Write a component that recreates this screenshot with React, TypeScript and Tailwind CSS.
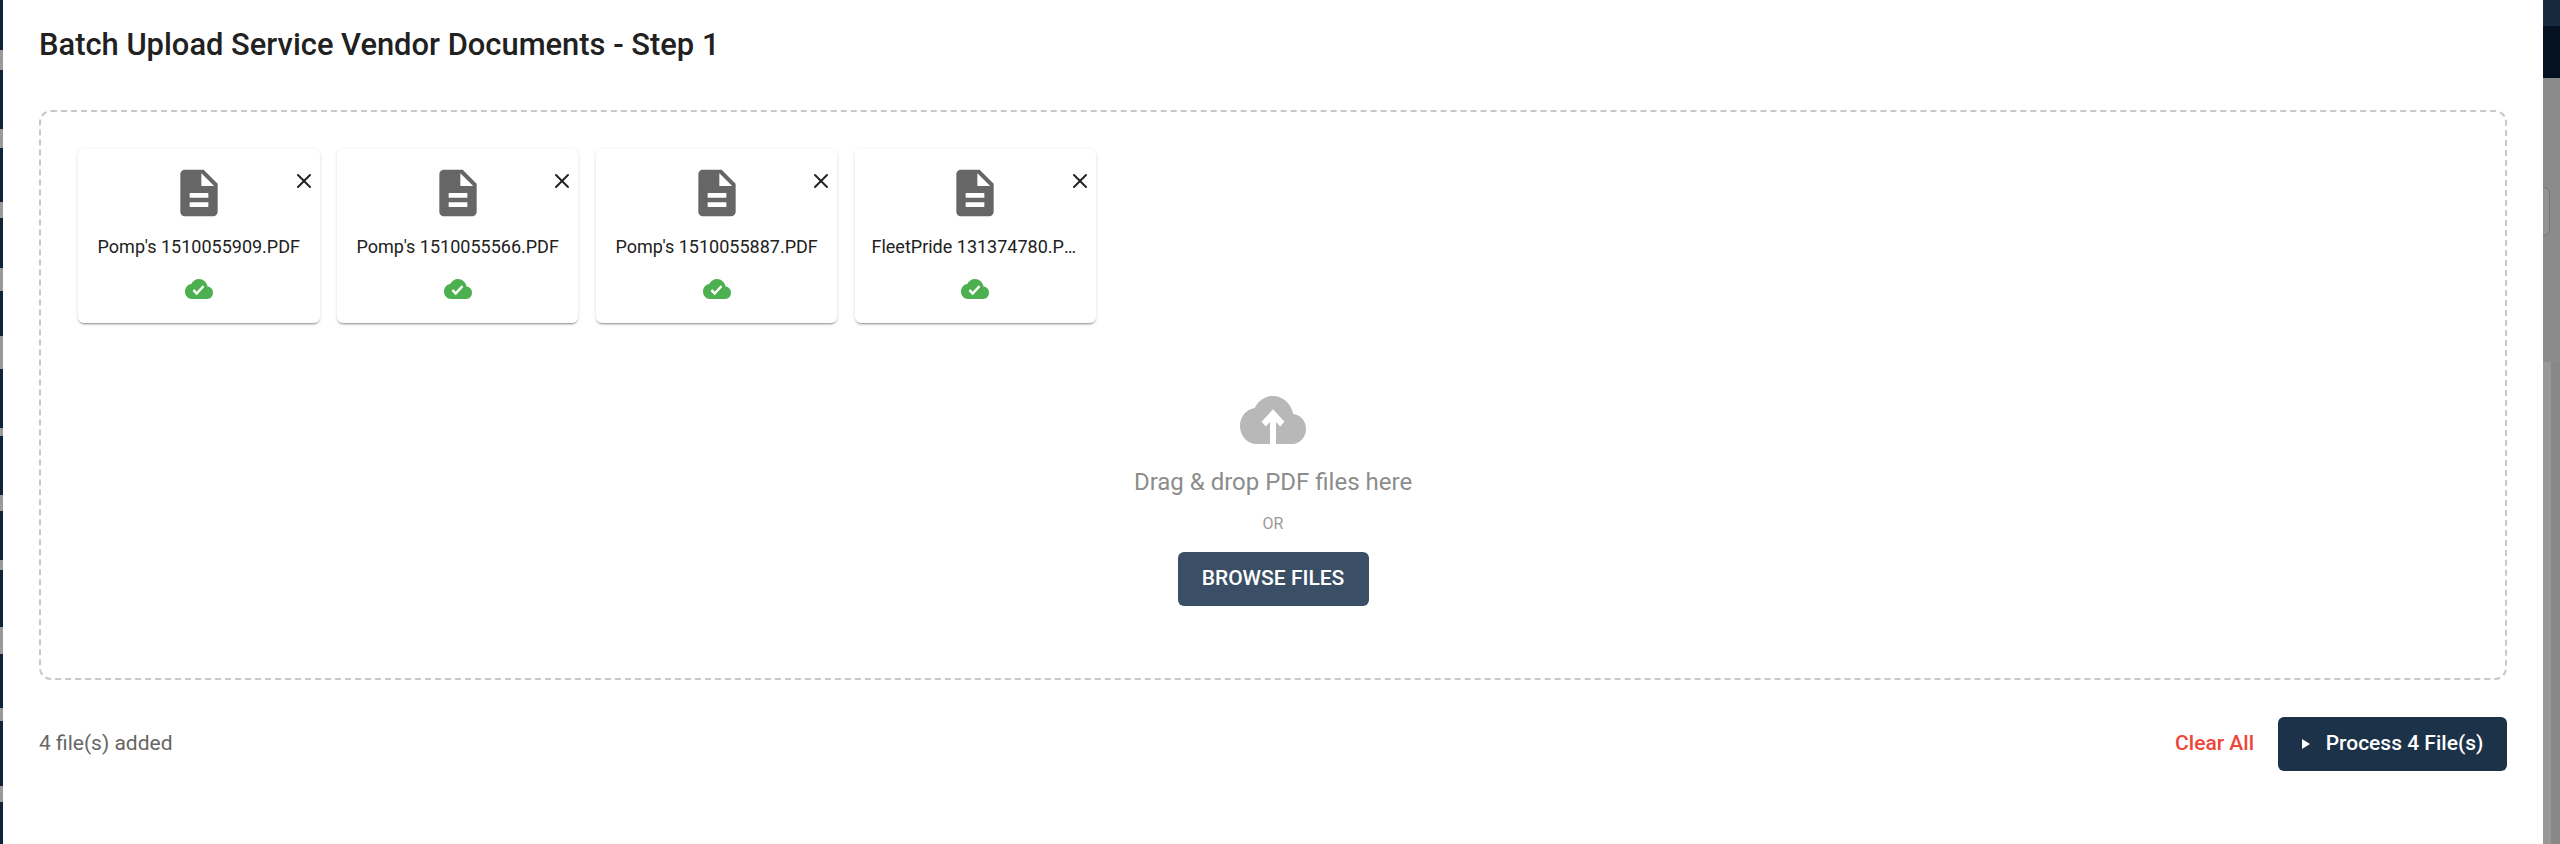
import React from "react";
import { X } from "lucide-react";

const files = [
  "Pomp's 1510055909.PDF",
  "Pomp's 1510055566.PDF",
  "Pomp's 1510055887.PDF",
  "FleetPride 131374780.PDF",
];

// left edge of the page behind the modal, dark with grey rows showing through
const leftStrip = [
  { h: 50, grey: false },
  { h: 20, grey: true },
  { h: 59, grey: false },
  { h: 19, grey: true },
  { h: 54, grey: false },
  { h: 16, grey: true },
  { h: 50, grey: false },
  { h: 23, grey: true },
  { h: 45, grey: false },
  { h: 33, grey: true },
  { h: 59, grey: false },
  { h: 8, grey: true },
  { h: 59, grey: false },
  { h: 16, grey: true },
  { h: 49, grey: false },
  { h: 10, grey: true },
  { h: 57, grey: false },
  { h: 27, grey: true },
  { h: 54, grey: false },
  { h: 13, grey: true },
  { h: 65, grey: false },
  { h: 16, grey: true },
  { h: 42, grey: false },
];

function FileIcon() {
  return (
    <svg viewBox="0 0 24 24" className="h-[56px] w-[56px] fill-[#666666]">
      <path d="M14 2H6c-1.1 0-1.99.9-1.99 2L4 20c0 1.1.89 2 1.99 2H18c1.1 0 2-.9 2-2V8l-6-6zm2 16H8v-2h8v2zm0-4H8v-2h8v2zm-3-5V3.5L18.5 9H13z" />
    </svg>
  );
}

function CloudDone() {
  return (
    <svg viewBox="0 0 24 24" preserveAspectRatio="none" className="h-[30px] w-[28px] fill-[#4caf50]">
      <path d="M19.35 10.04C18.67 6.59 15.64 4 12 4 9.11 4 6.6 5.64 5.35 8.04 2.34 8.36 0 10.91 0 14c0 3.31 2.69 6 6 6h13c2.76 0 5-2.24 5-5 0-2.64-2.05-4.78-4.65-4.96zM10 17l-3.5-3.5 1.41-1.41L10 14.17 15.18 9l1.41 1.41L10 17z" />
    </svg>
  );
}

function CloudUpload() {
  return (
    <svg viewBox="0 0 24 24" preserveAspectRatio="none" className="h-[72px] w-[66px]">
      <path
        className="fill-[#b8b8b8]"
        d="M19.35 10.04C18.67 6.59 15.64 4 12 4 9.11 4 6.6 5.64 5.35 8.04 2.34 8.36 0 10.91 0 14c0 3.31 2.69 6 6 6h13c2.76 0 5-2.24 5-5 0-2.64-2.05-4.78-4.65-4.96z"
      />
      <path
        d="M12 20V10.4M8.6 13.4L12 10l3.4 3.4"
        fill="none"
        stroke="#ffffff"
        strokeWidth={2.2}
      />
    </svg>
  );
}

function FileCard({ name }: { name: string }) {
  return (
    <div className="relative flex h-[174px] w-[241.6px] flex-col items-center rounded-md bg-white pt-[16px] shadow-[0_2px_2px_-1px_rgba(0,0,0,0.4),0_1px_4px_0_rgba(0,0,0,0.1)]">
      <FileIcon />
      <div className="mt-[13px] w-[208px] truncate text-center text-[18px] leading-[26px] text-[#212121]">
        {name}
      </div>
      <div className="mt-[14px] flex">
        <CloudDone />
      </div>
      <button className="absolute right-[4px] top-[20px] text-[#222222]">
        <X size={24} strokeWidth={2} />
      </button>
    </div>
  );
}

export default function App() {
  return (
    <div className="flex h-[844px] w-[2560px] overflow-hidden bg-white font-['Roboto',sans-serif]">
      <div className="flex w-[3px] flex-col">
        {leftStrip.map((s, i) =>
          s.grey ? (
            <div key={i} className="bg-[#9a9a9a]" style={{ height: s.h }} />
          ) : (
            <div key={i} className="bg-[#0f2438]" style={{ height: s.h }} />
          ),
        )}
      </div>

      <div className="flex min-w-0 flex-1 flex-col px-[36px]">
        <h1 className="mt-[26px] text-[30.9px] font-medium leading-[38px] text-[#212121]">
          Batch Upload Service Vendor Documents - Step 1
        </h1>

        <div className="mt-[46px] flex h-[570px] flex-col rounded-[12px] border-2 border-dashed border-[#c8c8c8] px-[37px] pt-[37px]">
          <div className="flex gap-[17.3px]">
            {files.map((f) => (
              <FileCard key={f} name={f} />
            ))}
          </div>

          <div className="mt-[61px] flex flex-col items-center">
            <CloudUpload />
            <div className="mt-[10px] text-[24px] leading-[32px] text-[#8c8c8c]">
              Drag &amp; drop PDF files here
            </div>
            <div className="mt-[16px] text-[16px] leading-[20px] text-[#9a9a9a]">OR</div>
            <button className="mt-[18px] flex h-[54px] w-[191px] items-center justify-center rounded-md bg-[#3a4f66] text-[21px] font-medium text-white">
              BROWSE FILES
            </button>
          </div>
        </div>

        <div className="mt-[37px] flex items-center justify-between">
          <span className="text-[21px] text-[#666666]">4 file(s) added</span>
          <div className="flex items-center gap-[24px]">
            <span className="text-[21px] font-medium text-[#ef4438]">Clear All</span>
            <button className="flex h-[54px] w-[229px] items-center justify-center gap-[16px] rounded-md bg-[#1b3249] text-[21px] font-medium text-white">
              <svg viewBox="0 0 8 10" className="h-[10px] w-[8px] fill-white">
                <path d="M0 0l8 5-8 5z" />
              </svg>
              Process 4 File(s)
            </button>
          </div>
        </div>
      </div>

      <div className="relative flex w-[17px] flex-col">
        <div className="h-[26px] bg-[#16293d]" />
        <div className="h-[52px] bg-[#031120]" />
        <div className="h-[284px] bg-[#8b8b8b]" />
        <div className="flex flex-1">
          <div className="w-[8px] bg-[#989898]" />
          <div className="flex-1 bg-[#888888]" />
        </div>
        {/* edge of a control behind the modal */}
        <div className="absolute left-0 top-[187px] h-[49px] w-[7px] rounded-r-md border border-l-0 border-[#777777] bg-[#939393]" />
      </div>
    </div>
  );
}
